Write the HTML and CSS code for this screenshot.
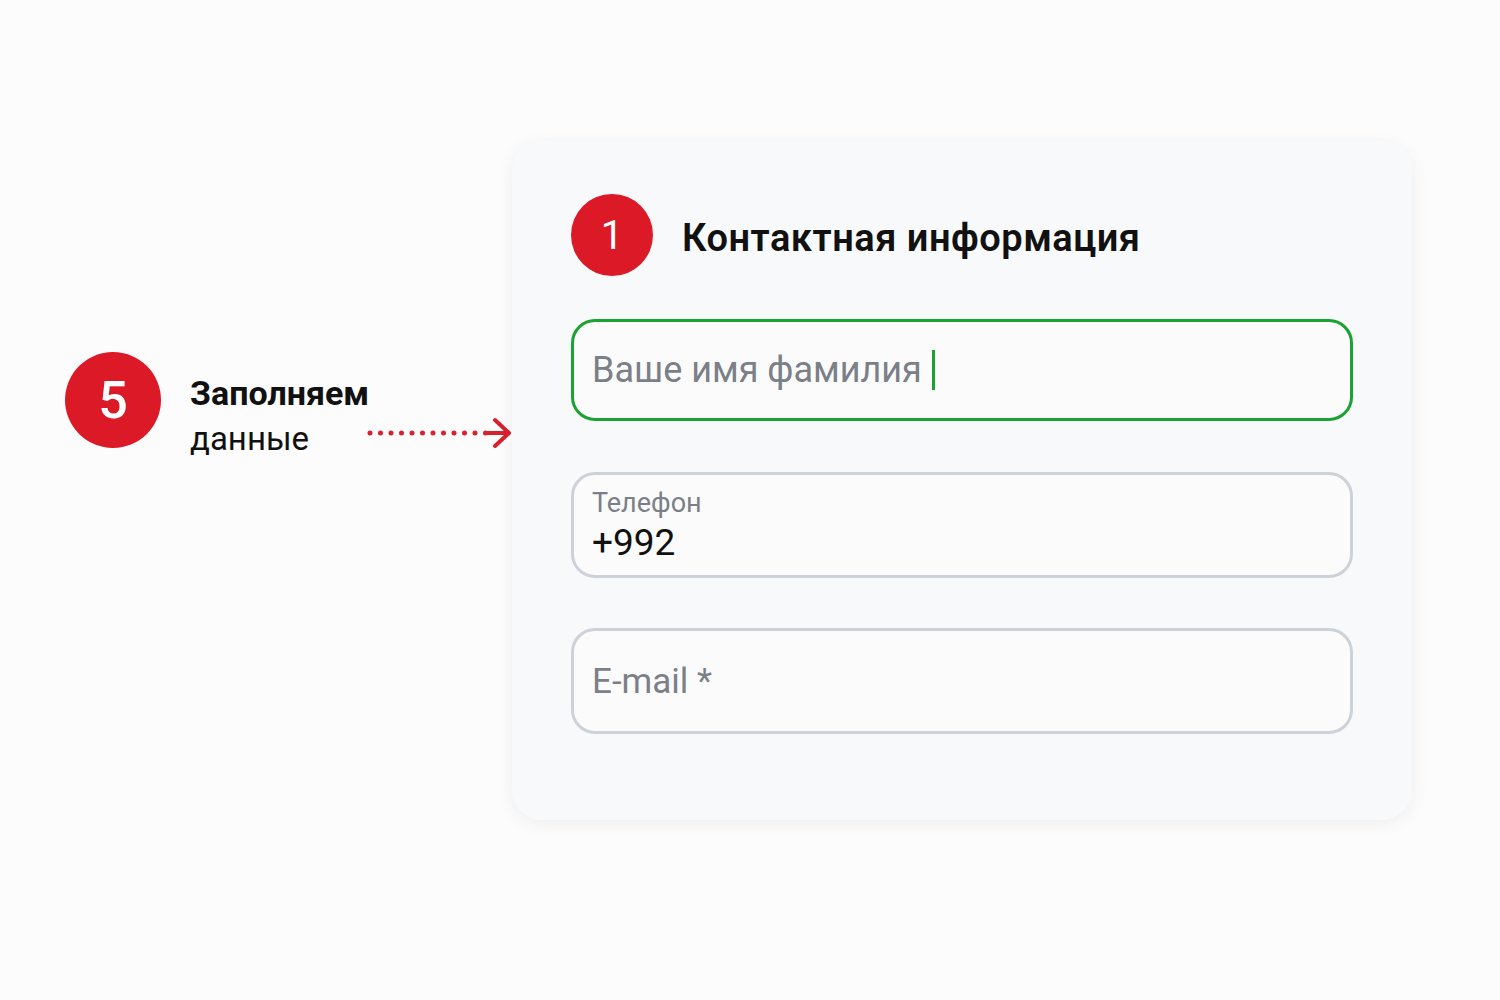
FILE: index.html
```html
<!DOCTYPE html>
<html lang="ru">
<head>
    <meta charset="UTF-8">
    <title>Контактная информация</title>
    <link rel="stylesheet" href="styles.css">
</head>
<body>
    <main class="page">
        <div class="step-note">
            <span class="step-badge step-badge-big">5</span>
            <div class="step-note-text">
                <b>Заполняем</b>
                <span>данные</span>
            </div>
            <svg class="step-arrow" width="146" height="36" viewBox="0 0 146 36">
                <line x1="4" y1="18" x2="124" y2="18" stroke="#d9202e" stroke-width="5" stroke-linecap="round" stroke-dasharray="0 10.5"/>
                <path d="M129 5 L143 18 L129 31" fill="none" stroke="#d9202e" stroke-width="4" stroke-linecap="round" stroke-linejoin="round"/>
                <line x1="120" y1="18" x2="142" y2="18" stroke="#d9202e" stroke-width="4" stroke-linecap="round"/>
            </svg>
        </div>

        <section class="card">
            <div class="card-head">
                <span class="step-badge">1</span>
                <h2>Контактная информация</h2>
            </div>

            <div class="field field-active">
                <span class="placeholder">Ваше имя фамилия</span>
                <span class="caret"></span>
            </div>

            <div class="field field-filled">
                <span class="field-label">Телефон</span>
                <span class="field-value">+992</span>
            </div>

            <div class="field">
                <span class="placeholder placeholder-small">E-mail *</span>
            </div>
        </section>
    </main>
</body>
</html>
```

FILE: styles.css
```css
html, body {
    margin: 0;
    height: 100%;
}
body {
    background-color: #fcfcfc;
    font-family: Roboto, "Noto Sans", sans-serif;
    color: #111;
}
.page {
    display: flex;
    align-items: flex-start;
    padding: 140px 0 0 65px;
}
.step-note {
    width: 447px;
    margin-top: 212px;
    display: flex;
    align-items: flex-start;
}
.step-badge {
    flex: none;
    width: 82px;
    height: 82px;
    border-radius: 50%;
    background-color: #dc1a27;
    color: #fff;
    display: flex;
    justify-content: center;
    align-items: center;
    font-size: 40px;
}
.step-badge-big {
    width: 96px;
    height: 96px;
    font-size: 52px;
    font-weight: 500;
}
.step-note-text {
    width: 176px;
    margin-left: 29px;
    padding-top: 18px;
    display: flex;
    flex-direction: column;
    white-space: nowrap;
    font-size: 33px;
    line-height: 46px;
}
.step-note-text b {
    font-weight: 700;
    font-size: 34px;
}
.step-arrow {
    flex: none;
    margin-left: auto;
    margin-top: 63px;
}
.card {
    width: 900px;
    height: 680px;
    box-sizing: border-box;
    padding: 54px 59px 0 59px;
    background-color: #f8f9fa;
    border-radius: 30px;
    box-shadow: 0 4px 18px rgba(0, 0, 0, 0.06);
}
.card-head {
    display: flex;
    align-items: center;
    gap: 29px;
    margin-bottom: 43px;
}
.card-head h2 {
    margin: 6px 0 0 0;
    font-size: 38px;
    font-weight: 600;
    letter-spacing: 0.5px;
    color: #111;
}
.field {
    box-sizing: border-box;
    height: 106px;
    border: 3px solid #cdd2d9;
    border-radius: 24px;
    background-color: #fbfbfc;
    padding: 0 18px;
    display: flex;
    align-items: center;
    margin-bottom: 50px;
}
.field-active {
    height: 102px;
    border-color: #1ba232;
    margin-bottom: 51px;
}
.placeholder {
    font-size: 36px;
    color: #7a7f88;
}
.placeholder-small {
    font-size: 35px;
}
.caret {
    width: 3px;
    height: 40px;
    margin-left: 10px;
    background-color: #1ba232;
}
.field-filled {
    flex-direction: column;
    align-items: flex-start;
    justify-content: center;
}
.field-label {
    font-size: 27px;
    color: #7a7f88;
    line-height: 36px;
}
.field-value {
    font-size: 37px;
    color: #111;
    line-height: 44px;
}
```
